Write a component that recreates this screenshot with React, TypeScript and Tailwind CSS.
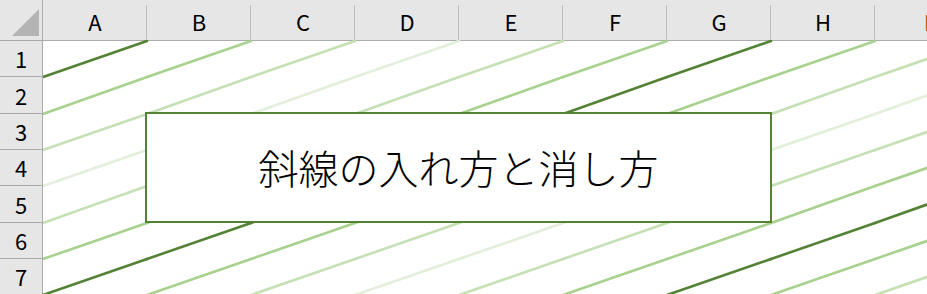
import type { CSSProperties } from 'react';

const COLS = ['A', 'B', 'C', 'D', 'E', 'F', 'G', 'H', 'I'];

// row heights include the 1px bottom rule
const ROWS = [
  { n: 1, h: 'h-[36px]' },
  { n: 2, h: 'h-[37px]' },
  { n: 3, h: 'h-[36px]' },
  { n: 4, h: 'h-[36px]' },
  { n: 5, h: 'h-[37px]' },
  { n: 6, h: 'h-[36px]' },
  { n: 7, h: 'h-[36px]' },
];

// diagonal colour repeats along each anti-diagonal (col + row)
const SHADES = ['#548235', '#a9d18e', '#c5e0b4', '#e2efda', '#c5e0b4', '#a9d18e'];

const font: CSSProperties = { fontFamily: '"Noto Sans CJK JP", "Noto Sans", sans-serif' };

function DiagonalCell({ color }: { color: string }) {
  return (
    <div className="h-full w-[104px] shrink-0">
      <svg className="block h-full w-full overflow-visible" viewBox="0 0 104 36" preserveAspectRatio="none">
        <line
          x1="0"
          y1="36"
          x2="104"
          y2="0"
          stroke={color}
          strokeWidth="2.6"
          strokeLinecap="round"
          vectorEffect="non-scaling-stroke"
        />
      </svg>
    </div>
  );
}

export default function App() {
  return (
    <div className="relative h-[294px] w-[927px] overflow-hidden bg-white" style={font}>
      {/* column headers */}
      <div className="flex h-[41px] border-b border-[#ababab] bg-[#e6e6e6]">
        <div className="relative h-full w-[43px] shrink-0 border-r border-[#ababab]">
          <svg className="absolute inset-0" width="42" height="40" viewBox="0 0 42 40">
            <polygon points="12,36 39,36 39,9" fill="#b4b4b4" />
          </svg>
        </div>
        {COLS.map((c) => (
          <div
            key={c}
            className="flex h-full w-[104px] shrink-0 items-center justify-center pt-[2px] text-[22px] text-black"
          >
            <span className={c === 'I' ? 'text-[#c55a11]' : ''}>{c}</span>
          </div>
        ))}
      </div>
      {/* separators between column headers */}
      <div className="pointer-events-none absolute left-[43px] top-[5px] flex h-[35px]">
        {COLS.map((c) => (
          <div key={c} className="h-full w-[104px] shrink-0 border-r border-[#bcbcbc]" />
        ))}
      </div>

      {/* rows */}
      {ROWS.map((row, r) => (
        <div key={row.n} className={`flex ${row.h}`}>
          <div className="relative z-10 flex h-full w-[43px] shrink-0 items-center justify-center border-b border-r border-[#ababab] bg-[#e6e6e6] text-[22px] text-black">
            {row.n}
          </div>
          {COLS.map((c, i) => (
            <DiagonalCell key={c} color={SHADES[(i + r) % 6]} />
          ))}
        </div>
      ))}

      {/* text box shape sitting over B3:G5 */}
      <div className="absolute left-[145px] top-[112px] flex h-[111px] w-[627px] items-center justify-center border-2 border-[#548235] bg-white">
        <span className="pb-[2px] text-[40px] font-light leading-none text-black">斜線の入れ方と消し方</span>
      </div>
    </div>
  );
}
